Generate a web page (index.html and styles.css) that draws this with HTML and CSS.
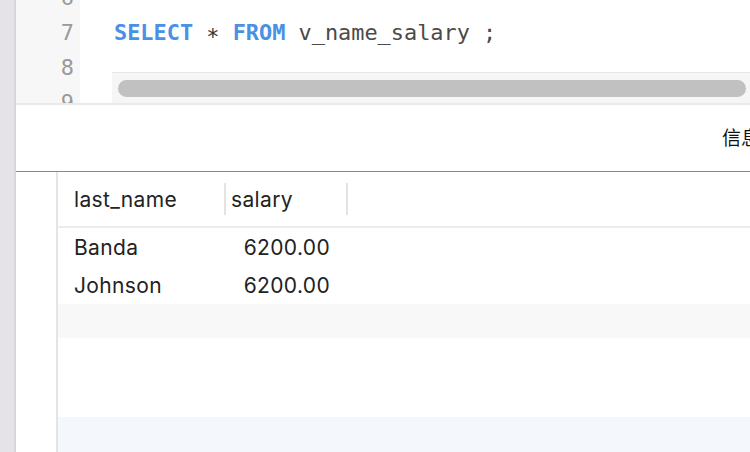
FILE: index.html
```html
<!DOCTYPE html>
<html>
<head>
<meta charset="utf-8">
<link rel="stylesheet" href="styles.css">
</head>
<body>
<div class="app">
  <div class="sidebar"></div>
  <div class="main">
    <div class="editor">
      <div class="gutter">
        <div class="ln">6</div>
        <div class="ln">7</div>
        <div class="ln">8</div>
        <div class="ln">9</div>
      </div>
      <div class="code">
        <div class="lines">
          <div class="line"></div>
          <div class="line"><span class="kw">SELECT</span> <span class="op">∗</span> <span class="kw">FROM</span> v_name_salary ;</div>
          <div class="line"></div>
          <div class="line"></div>
        </div>
        <div class="hscroll"><div class="thumb"></div></div>
      </div>
    </div>
    <div class="panel">
      <span class="tab">信息</span>
    </div>
    <div class="grid">
      <div class="rownum-col"></div>
      <div class="table">
        <div class="row head">
          <div class="cell c1">last_name</div>
          <div class="sep"></div>
          <div class="cell c2">salary</div>
          <div class="sep"></div>
        </div>
        <div class="row data">
          <div class="cell c1">Banda</div>
          <div class="cell c2">6200.00</div>
        </div>
        <div class="row data">
          <div class="cell c1">Johnson</div>
          <div class="cell c2">6200.00</div>
        </div>
        <div class="row stripe"></div>
        <div class="row blank"></div>
        <div class="row selected"></div>
      </div>
    </div>
  </div>
</div>
</body>
</html>
```
FILE: styles.css
```css
* { box-sizing: border-box; }
html, body { margin: 0; padding: 0; }
body {
  width: 750px;
  height: 452px;
  overflow: hidden;
  background: #fff;
  font-family: Inter, "Noto Sans CJK SC", sans-serif;
}
.app { display: flex; height: 452px; }
.sidebar {
  width: 16px;
  flex: none;
  background: #e5e3e8;
  border-right: 2px solid #d7d5db;
}
.main { flex: 1; display: flex; flex-direction: column; min-width: 0; overflow: hidden; }

.editor {
  height: 105px;
  flex: none;
  display: flex;
  border-bottom: 2px solid #e9e9e9;
  overflow: hidden;
  font-family: "DejaVu Sans Mono", monospace;
  font-size: 21.9px;
}
.gutter {
  width: 64px;
  flex: none;
  background: #f7f7f7;
  margin-top: -20px;
}
.ln {
  height: 35px;
  line-height: 35px;
  text-align: right;
  padding-right: 6px;
  color: #9a9a9a;
}
.code { flex: 1; position: relative; }
.lines { margin-top: -20px; padding-left: 34px; }
.line { height: 35px; line-height: 35px; color: #4a4a4a; white-space: pre; }
.kw { color: #4a90e6; font-weight: bold; }
.op { color: #333; }
.hscroll {
  position: absolute;
  left: 32px;
  right: 0;
  top: 72px;
  height: 32px;
  background: #f6f6f6;
  border-top: 1px solid #e7e7e7;
  padding: 7px 4px 0 6px;
}
.thumb { height: 17px; border-radius: 9px; background: #c1c1c1; }

.panel {
  height: 67px;
  flex: none;
  border-bottom: 1px solid #888;
  display: flex;
  align-items: center;
  padding-left: 706px;
  white-space: nowrap;
  font-size: 19px;
  color: #111;
}
.tab { margin-top: -4px; }

.grid { flex: 1; display: flex; }
.rownum-col { width: 42px; flex: none; border-right: 2px solid #e4e4e4; }
.table { flex: 1; display: flex; flex-direction: column; }
.row { display: flex; align-items: center; }
.head, .data { font-size: 21px; letter-spacing: 0.35px; color: #222; }
.head { height: 56px; border-bottom: 2px solid #ececec; }
.data { height: 38px; }
.cell { flex: none; white-space: nowrap; }
.c1 { width: 166px; padding-left: 16px; }
.head .c2 { width: 120px; padding-left: 5px; }
.data .c1 { width: 168px; }
.data .c2 { width: 104px; text-align: right; }
.sep { width: 2px; height: 32px; background: #e3e3e3; flex: none; }
.stripe { height: 34px; background: #f8f8f8; }
.blank { height: 79px; }
.selected { flex: 1; background: #f4f7fc; }
```
